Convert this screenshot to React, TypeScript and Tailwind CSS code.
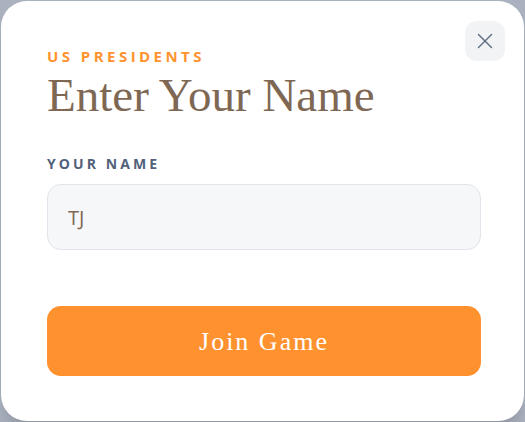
import React from 'react';
import { X } from 'lucide-react';

export default function App() {
  return (
    <div className="w-[525px] h-[422px] bg-[#aab2bf] p-px">
      <div className="relative h-full w-full rounded-[26px] bg-white pl-[46px] pr-[43px] pt-[45px] shadow-xl">
        <button className="absolute right-[19px] top-5 flex h-10 w-10 items-center justify-center rounded-xl bg-[#f1f3f5] text-[#5b6b82]">
          <X size={26} strokeWidth={1.3} />
        </button>

        <div className="text-[15px] leading-5 font-bold uppercase tracking-[0.23em] text-[#ff9330] [font-family:'Open_Sans',sans-serif]">
          US Presidents
        </div>
        <h1 className="mt-[6px] text-[47px] leading-none text-[#7e6853] [font-family:'Liberation_Serif',serif]">
          Enter Your Name
        </h1>

        <label className="mt-[35px] block text-[14px] leading-5 font-bold uppercase tracking-[0.22em] text-[#52617a] [font-family:'Open_Sans',sans-serif]">
          Your Name
        </label>
        <input
          defaultValue="TJ"
          className="mt-[10px] block h-[66px] w-full rounded-[14px] border border-[#e1e4ea] bg-[#f6f7f9] px-5 text-[20px] text-[#7e6853] outline-none [font-family:'Open_Sans',sans-serif]"
        />

        <button className="mt-[56px] flex h-[70px] w-full items-center justify-center rounded-[14px] bg-[#ff922f] text-[26px] tracking-[2px] text-white [font-family:'Liberation_Serif',serif]">
          Join Game
        </button>
      </div>
    </div>
  );
}
